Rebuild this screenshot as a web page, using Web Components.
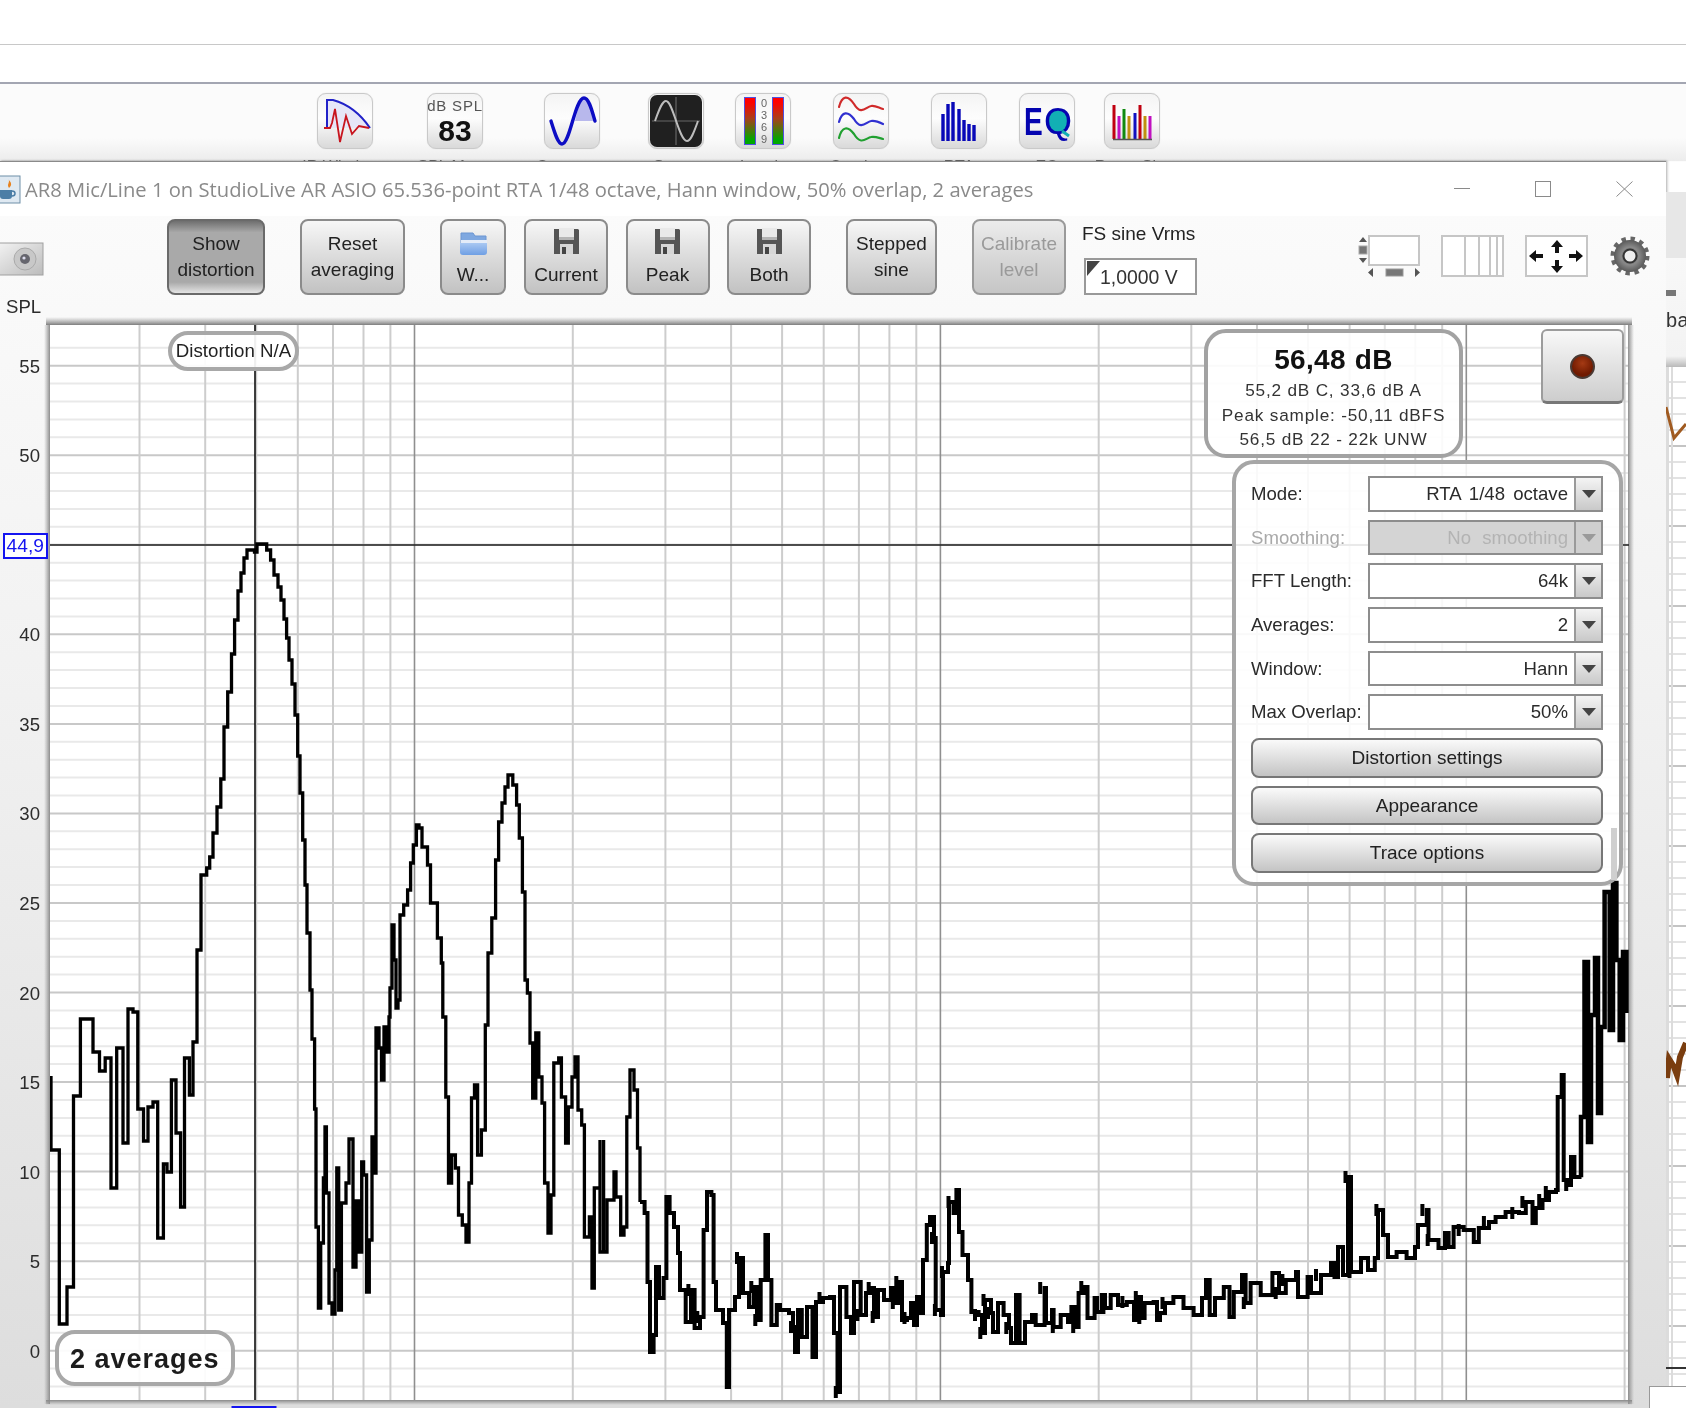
<!DOCTYPE html>
<html lang="en"><head><meta charset="utf-8"><title>REW RTA</title>
<style>
html,body{margin:0;padding:0;background:#fff;overflow:hidden}
body{font-family:"Liberation Sans",Arial,sans-serif;color:#222}
</style></head><body>
<rew-app></rew-app>
<script>
const base=':host{box-sizing:border-box} *,*::before,*::after{box-sizing:border-box}';
function def(name,html,extra){
  customElements.define(name,class extends HTMLElement{
    constructor(){super();const r=this.attachShadow({mode:'open'});
      r.innerHTML='<style>'+base+'</style>'+(typeof html==='function'?html(this):html);}
    connectedCallback(){if(extra)extra(this);}
  });
}
const FLOPPY='<svg width="25" height="26" viewBox="0 0 25 26"><path d="M0 1h24l1 1v24H0z" fill="#555"/><rect x="5" y="0" width="15" height="12" fill="#e9e9e9"/><rect x="5" y="9" width="15" height="3" fill="#b5b5b5"/><rect x="6" y="16" width="13" height="10" fill="#d6d6d6"/><rect x="8" y="19" width="4" height="7" fill="#444"/></svg>';
const FOLDER='<svg width="27" height="25" viewBox="0 0 27 25"><defs><linearGradient id="f" x1="0" y1="0" x2="0" y2="1"><stop offset="0" stop-color="#a9c8f2"/><stop offset="1" stop-color="#6f9fe4"/></linearGradient></defs><path d="M1 2h12l2 3h11v7H1z" fill="#7fa8e0" stroke="#6d96d2"/><rect x="1" y="9" width="26" height="3" fill="#e4ecf8"/><path d="M0 12h27v9q0 3-3 3H3q-3 0-3-3z" fill="url(#f)"/></svg>';

def('icon-tile',`<style>
:host{display:flex;flex:none;flex-direction:column;align-items:center;width:56px;height:90px}
.t{flex:none;width:56px;height:56px;border-radius:9px;border:1px solid #c9c9c9;background:linear-gradient(#f4f4f4,#fdfdfd 45%,#d9d9d9);display:block;overflow:hidden;box-shadow:0 0 1px #ccc}
.l{flex:none;margin-top:9px;font-size:16px;line-height:18px;white-space:nowrap;color:#555;display:flex;justify-content:center;width:56px}
::slotted(svg){display:block;width:54px;height:54px}
</style><div class="t"><slot></slot></div><div class="l"><span><slot name="label"></slot></span></div>`);

def('rew-iconbar',`<style>
:host{display:flex;flex:none;height:77px;padding:9px 0 0 317px;overflow:hidden;align-items:flex-start;background:linear-gradient(#fbfbfb,#fbfbfb 70%,#ececec)}
</style><slot></slot>`);

def('tool-button',(h)=>`<style>
:host{display:flex;flex:none;flex-direction:column;align-items:center;justify-content:center;height:76px;border-radius:8px;border:2px solid #8b8b8b;background:linear-gradient(#f7f7f7,#dedede 45%,#c2c2c2);font-size:19px;line-height:26.5px;color:#222;text-align:center}
:host([disabled]){color:#9a9a9a;border-color:#9a9a9a;background:linear-gradient(#ececec,#d8d8d8 50%,#c6c6c6)}
:host([pressed]){border-color:#6a6a6a;background:linear-gradient(#6f6f6f,#a9a9a9 16%,#a9a9a9 85%,#e4e4e4)}
:host([icon]){justify-content:flex-start;padding-top:7px}
.i{height:34px;display:flex;align-items:flex-start;flex:none}
</style>${h.hasAttribute('icon')?'<div class="i">'+(h.getAttribute('icon')==='folder'?'<span style="padding-top:3px;display:block">'+FOLDER+'</span>':FLOPPY)+'</div>':''}<slot></slot>`);

def('rew-select',(h)=>`<style>
:host{display:flex;flex:none;align-items:center;height:35.7px;font-size:18.6px;color:#2b2b2b}
.l{width:117px;flex:none;white-space:nowrap}
.b{flex:1;height:100%;display:flex;border:2px solid #8d8d8d;background:#fff}
.v{flex:1;text-align:right;padding-right:6px;line-height:32px;white-space:nowrap;word-spacing:3px}
.a{width:27px;flex:none;border-left:2px solid #9a9a9a;background:linear-gradient(#f4f4f4,#c9c9c9);display:flex;align-items:center;justify-content:center}
.a i{display:block;width:0;height:0;border:7px solid transparent;border-top:8px solid #444;border-bottom:0}
:host([disabled]){color:#a9a9a9}
:host([disabled]) .b{background:#d4d4d4}
:host([disabled]) .v{color:#b3b3b3;word-spacing:6px}
:host([disabled]) .a{background:#cfcfcf}
:host([disabled]) .a i{border-top-color:#9a9a9a}
</style><span class="l">${h.getAttribute('label')}</span><div class="b"><span class="v"><slot></slot></span><span class="a"><i></i></span></div>`);

def('rew-button',`<style>
:host{display:block;flex:none;height:39.5px;border-radius:8px;border:2px solid #777;background:linear-gradient(#fafafa,#e2e2e2 45%,#c4c4c4);font-size:19px;line-height:36px;text-align:center;color:#222}
</style><slot></slot>`);

def('control-panel',`<style>
:host{position:absolute;left:1232px;top:164px;width:391px;height:426px;border:4px solid #a6a6a6;border-radius:22px;background:rgba(255,255,255,.88);padding:12px 16px 0 15px;display:flex;flex-direction:column;gap:8px}
.s{position:absolute;left:375px;top:364px;width:6px;height:52px;background:#cfcfcf}
</style><slot></slot><div class="s"></div>`);

def('level-panel',`<style>
:host{position:absolute;left:1204px;top:33px;width:259px;height:129px;border:4px solid #a2a2a2;border-radius:22px;background:rgba(255,255,255,.9);display:flex;flex-direction:column;align-items:center;padding-top:9px;color:#333;font-size:17.2px;letter-spacing:.8px;line-height:24.5px;text-align:center;white-space:nowrap}
.m{font-size:28px;line-height:35px;font-weight:700;color:#111;letter-spacing:.3px;margin-bottom:1px;word-spacing:1px}
</style><div class="m">56,48 dB</div><div>55,2 dB C, 33,6 dB A</div><div>Peak sample: -50,11 dBFS</div><div>56,5 dB 22 - 22k UNW</div>`);

def('record-button',`<style>
:host{position:absolute;left:1541px;top:33px;width:83px;height:75px;border-radius:6px;border:2px solid #9c9c9c;border-bottom:3px solid #777;background:linear-gradient(#f8f8f8,#cdcdcd);display:flex;align-items:center;justify-content:center}
i{display:block;width:25px;height:25px;border-radius:50%;border:2px solid #4a3a34;background:radial-gradient(circle at 50% 35%,#a53a14,#701a00 65%)}
</style><i></i>`);

def('info-pill',`<style>
:host{position:absolute;display:flex;align-items:center;justify-content:center;white-space:nowrap;background:rgba(255,255,255,.92);border:4px solid #a8a8a8;border-radius:20px;color:#222}
</style><slot></slot>`);

def('value-tag',`<style>
:host{position:absolute;left:3px;top:237px;width:44.5px;height:26px;border:2px solid #1414f0;background:#fff;color:#1414f0;font-size:19.2px;line-height:22px;text-align:center}
</style><slot></slot>`);

const TR=[[59.3,1150],[59.3,1324],[67,1324],[67,1287],[73.5,1287],[73.5,1096],[80.4,1096],[80.4,1019],[93,1019],[93,1052],[99.5,1052],[99.5,1071],[105.2,1071],[105.2,1058],[111,1058],[111,1188],[116.7,1188],[116.7,1048],[123,1048],[123,1143],[128,1143],[128,1009],[133,1009],[133,1012],[137.8,1012],[137.8,1109],[143.5,1109],[143.5,1141],[148,1141],[148,1107],[153,1107],[153,1102],[157.7,1102],[157.7,1238],[163.4,1238],[163.4,1164],[167,1164],[167,1172],[171.4,1172],[171.4,1080],[176,1080],[176,1133],[180.6,1133],[180.6,1207],[184.5,1207],[184.5,1058],[189.4,1058],[189.4,1095],[193,1095],[193,1042],[197,1042],[197,950]];
const S=[[201,875],[206.7,868],[209.7,857],[213,833],[217,807],[220.8,779],[224,727],[227.7,692],[231.5,654],[234.6,620],[238,591],[241,573],[244,558],[247,550],[254.5,552],[257,544],[262,544],[266.7,550],[270.6,560],[274,575],[278,587],[281,600],[284,619],[286.6,638],[289,660],[292,684],[295,715],[297.7,756],[300,793],[302.7,840],[305,885],[307,933],[310,990],[312,1039],[314.6,1109],[316,1227],[318.4,1308],[320.7,1243],[323.4,1178],[325,1127],[326.4,1193],[329,1303],[332,1314],[335,1270],[336.8,1168],[338.7,1310],[341.4,1203],[346,1183],[349,1139],[353,1267],[356,1201],[359,1252],[361.7,1162],[363.6,1175],[366.6,1292],[369.3,1240],[372,1137],[375,1173],[376,1028],[379,1048],[381.5,1080],[384,1027],[387.3,1052],[389,1017],[390,988],[392,925],[394,960],[396,1008],[398,1000],[400,915],[403.7,905],[407.6,890],[410.6,863],[413.3,845],[416.4,825],[419,828],[422,847],[427.5,865],[430.5,903],[435.5,903],[437.4,938],[441.3,963],[442.8,1017],[445.8,1097],[448.5,1183],[451.6,1155],[455.4,1168],[458.5,1215],[462.3,1225],[466,1242],[469,1183],[471.5,1098],[474.5,1085],[477.6,1155],[481.4,1130],[485.3,1025],[488,953],[491.8,918],[495.6,860],[498.6,822],[502,803],[505,787],[508,775],[511,775],[512.8,785],[516.6,805],[519.3,838],[522.4,892],[525,980],[527.4,993],[530,1043],[532.7,1098],[535.8,1033],[538.8,1077],[542,1103],[544.6,1183],[548,1233],[551,1195],[553.8,1063],[558.7,1058],[561.4,1097],[565.6,1143],[568.3,1107],[572,1077],[575,1057],[578,1110],[581.7,1125],[584.4,1237],[589.4,1217],[592,1288],[594.3,1188],[600,1140],[600,1252],[603.6,1140],[603.6,1252],[607,1200],[614,1172],[616,1197],[620.7,1235],[624,1227],[626.8,1117],[630,1070],[634,1090],[637.5,1148],[640,1202],[644.6,1213],[647.5,1282],[650,1352],[653.6,1335],[656,1267],[659,1298],[663.6,1278],[666.4,1197],[669.6,1213],[674,1227],[678,1253],[680,1290],[685.7,1322],[691,1290],[694.6,1328],[700,1317],[703.6,1230],[707,1192],[711.4,1195],[713.6,1282],[716,1310],[723,1323],[726.8,1387],[729,1310],[735,1297],[739,1258],[743,1293],[749,1307],[753.6,1287],[757,1320],[760.7,1280],[765.4,1235],[768,1280],[771.4,1325],[776.8,1305],[780,1310],[789,1313],[793,1327],[795,1352],[798,1310],[801.8,1337],[807,1307],[812.5,1357],[816,1302],[823,1298],[830,1297],[834,1333],[837.5,1392],[840,1287],[846.4,1317],[851,1333],[854,1282],[860.7,1315],[866,1293],[871.4,1288],[874,1317],[878,1290],[884,1300],[891,1288],[894.6,1303],[898,1282],[902,1320],[907,1318],[911,1303],[914,1325],[917,1297],[919.6,1313],[923,1260],[926.8,1225],[930,1217],[934,1238],[935.7,1310],[941,1315],[943,1272],[948,1263],[949,1202],[953.6,1213],[956.4,1190],[959,1232],[962.5,1255],[968,1280],[971.4,1312],[978.6,1315],[982,1333],[985,1300],[991,1313],[993,1332],[998,1303],[1003.6,1315],[1009,1328],[1011,1343],[1016,1295],[1019.6,1343],[1025,1322],[1032,1315],[1035.7,1325],[1044.6,1288],[1046,1323],[1052,1310],[1053.6,1327],[1060.7,1315],[1068,1322],[1071.4,1307],[1075,1327],[1078.6,1293],[1084,1287],[1087.5,1318],[1094.6,1298],[1097,1312],[1101.8,1295],[1105,1308],[1110.7,1295],[1118,1305],[1126.8,1302],[1134,1320],[1137.5,1297],[1141,1318],[1144.6,1303],[1153.6,1302],[1157,1320],[1160,1313],[1165,1303],[1173.4,1297],[1183.5,1308],[1193.6,1315],[1202,1298],[1206,1280],[1209.7,1315],[1215,1298],[1223.8,1287],[1229.5,1317],[1233.8,1292],[1242,1275],[1245.6,1303],[1250.6,1283],[1260.7,1295],[1272.4,1273],[1279,1293],[1285.8,1280],[1296,1272],[1298,1297],[1307.6,1277],[1311,1293],[1321,1275],[1331,1263],[1334.5,1277],[1338,1247],[1343,1275],[1348,1177],[1351,1272],[1361,1258],[1368,1270],[1374.8,1258],[1378,1210],[1383,1235],[1388,1257],[1396.6,1252],[1406.6,1258],[1415,1247],[1418,1225],[1426.8,1210],[1428.5,1240],[1438.5,1248],[1445,1233],[1448.6,1247],[1453.6,1227],[1463.7,1230],[1473.8,1242],[1478.8,1228],[1489,1222],[1495.6,1217],[1505.6,1212],[1519,1213],[1525.8,1202],[1532.5,1223],[1535.8,1208],[1542.5,1200],[1549,1192],[1556,1190],[1557.7,1097],[1561.7,1075],[1563.7,1180],[1568.7,1185],[1571,1157],[1574.4,1177],[1579.5,1175],[1581,1117],[1584.5,962],[1588,1142],[1591,1015],[1595,958],[1598,1113],[1601,1027],[1604.6,892],[1609.7,1030],[1613,883],[1616.4,960],[1619.7,1040],[1623,952],[1626.4,1013]];

def('rew-plot',()=>{
  const L=50,R=1628,T=325,B=1400;const y=d=>1350.7-17.91*d;let g='';
  for(let d=-2;d<=56;d++){ if(d%5===0)continue; const p=y(d).toFixed(1);g+=`<line x1="${L}" x2="${R}" y1="${p}" y2="${p}" stroke="#e9e9e9" stroke-width="2"/>`;}
  for(let d=0;d<=55;d+=5){const p=y(d).toFixed(1);g+=`<line x1="${L}" x2="${R}" y1="${p}" y2="${p}" stroke="#c8c8c8" stroke-width="2"/>`;}
  for(let dec=-1;dec<=3;dec++){for(let m=1;m<=9;m++){const x=414.5+525.9*(dec+Math.log10(m));if(x<L+4||x>R+1)continue;
    g+=`<line x1="${x.toFixed(1)}" x2="${x.toFixed(1)}" y1="${T}" y2="${B}" stroke="${m===1?'#8f8f8f':'#cdcdcd'}" stroke-width="${m===1?1.6:2}"/>`;}}
  let lab='';for(let d=0;d<=55;d+=5){if(d===45)continue;lab+=`<text x="40" y="${(y(d)+7).toFixed(1)}" text-anchor="end">${d}</text>`;}
  let dp='M51 1076V1150';
  for(const p of TR)dp+=`L${p[0]} ${p[1]}`;
  let d2='',d3='',d4='',px=197,py=950;
  for(const p of S){
    if(p[0]<=640)dp+=`H${p[0]}V${p[1]}`;
    else if(p[0]<=1580){ if(!d2)d2=`M${px} ${py}`; d2+=`H${p[0]}V${p[1]}`;
      if(p[0]>690&&(Math.round(p[0]*7)%3)===1){const mx=(p[0]+px)/2;d4+=`M${mx.toFixed(1)} ${p[1]-6}v12`;}}
    else { if(!d3)d3=`M${px} ${py}`; d3+=`H${p[0]}V${p[1]}`; }
    px=p[0];py=p[1];
  }
  return `<style>
:host{display:block;position:relative;flex:1;min-height:0}
svg{position:absolute;left:0;top:0;display:block}
text{font-family:"Liberation Sans",Arial,sans-serif;font-size:18.6px;fill:#2c2c2c}
</style>
<svg width="1634" height="1112" viewBox="0 296 1634 1112">
<defs>
<linearGradient id="sl" x1="0" x2="1" y1="0" y2="0"><stop offset="0" stop-color="#999" stop-opacity="0"/><stop offset="1" stop-color="#8d8d8d"/></linearGradient>
<linearGradient id="sr" x1="1" x2="0" y1="0" y2="0"><stop offset="0" stop-color="#999" stop-opacity="0"/><stop offset="1" stop-color="#8d8d8d"/></linearGradient>
<linearGradient id="st" x1="0" x2="0" y1="0" y2="1"><stop offset="0" stop-color="#999" stop-opacity="0"/><stop offset="1" stop-color="#7d7d7d"/></linearGradient>
<linearGradient id="sb" x1="0" x2="0" y1="1" y2="0"><stop offset="0" stop-color="#999" stop-opacity="0"/><stop offset="1" stop-color="#888"/></linearGradient>
<clipPath id="c"><rect x="${L}" y="${T}" width="${R-L+1}" height="${B-T}"/></clipPath></defs>
<rect x="44" y="325" width="6" height="1079" fill="url(#sl)"/>
<rect x="1628" y="325" width="6" height="1079" fill="url(#sr)"/>
<rect x="46" y="317" width="1586" height="8" fill="url(#st)"/>
<rect x="46" y="1400" width="1586" height="5" fill="url(#sb)"/>
<rect x="${L}" y="${T}" width="${R-L}" height="${B-T}" fill="#fff"/>
${g}
<g clip-path="url(#c)">
<line x1="255" x2="255" y1="323" y2="1400" stroke="#111" stroke-width="1.6"/>
<line x1="50" x2="1630" y1="545" y2="545" stroke="#222" stroke-width="1.6"/>
<path d="${dp}" fill="none" stroke="#000" stroke-width="3.3"/>
<path d="${d2}" fill="none" stroke="#000" stroke-width="4"/>
<path d="${d4}" fill="none" stroke="#000" stroke-width="4"/>
<path d="${d3}" fill="none" stroke="#000" stroke-width="4.5"/>
</g>
<text x="6" y="313">SPL</text>
${lab}
<rect x="231.5" y="1406" width="45" height="4" fill="#1414f0"/>
</svg><slot></slot>`;
});

def('window-title',`<style>
:host{display:flex;flex:none;align-items:center;height:55px;background:#fff;padding-right:33px;font-family:"Open Sans",sans-serif;color:#8a8a8a;font-size:20.2px;border-top:1px solid #8a8a8a;white-space:nowrap}
.j{flex:none;width:21px;height:29px;margin:0 4px 0 0}
.t{flex:1}
.c{flex:none;display:flex;align-items:center}
</style><svg class="j" viewBox="0 0 21 29"><rect x="-3" y="1" width="23" height="27" fill="#dfe9f2" stroke="#6e8fa8"/><path d="M8 4c3 3-2 5 1 9 3-3 3-5-1-9z" fill="#e8821e"/><path d="M0 15h12v6c0 2-1 3-3 3H3c-2 0-3-1-3-3z" fill="#4c7ea6"/><path d="M12 16c4 0 4 5 0 5" fill="none" stroke="#4c7ea6" stroke-width="1.5"/></svg>
<span class="t"><slot></slot></span>
<div class="c"><svg width="16" height="16" viewBox="0 0 16 16" style="margin-right:65px"><path d="M0 7.5h16" stroke="#8a8a8a"/></svg>
<svg width="16" height="16" viewBox="0 0 16 16" style="margin-right:65px"><rect x=".5" y=".5" width="15" height="15" fill="none" stroke="#8a8a8a"/></svg>
<svg width="17" height="16" viewBox="0 0 17 16"><path d="M.5 .5l16 15M16.5 .5l-16 15" stroke="#8a8a8a" fill="none"/></svg></div>`);

def('tool-row',`<style>
:host{display:flex;flex:none;height:80px;padding-top:3px;align-items:flex-start}
</style><slot></slot>`);

def('fs-input',`<style>
:host{display:flex;flex:none;flex-direction:column;width:116px;height:76px;font-size:19px;color:#222}
.l{height:39px;flex:none;white-space:nowrap;padding-top:3px;line-height:24px}
.b{flex:none;width:113px;height:37px;margin-left:2px;border:2px solid #999;background:#fff;position:relative;padding-left:14px;line-height:35px;white-space:nowrap;color:#333;font-size:19.4px}
.b::before{content:"";position:absolute;left:1px;top:1px;border-top:15px solid #444;border-right:13px solid transparent}
</style><div class="l"><slot name="label"></slot></div><div class="b"><slot></slot></div>`);

def('rew-backdrop',`<style>
:host{display:flex;flex-direction:column;flex:1;position:relative;overflow:hidden;background:#fff;box-shadow:inset 3px 0 3px -2px #aaa}
.a{height:31px;flex:none}.b{height:66px;flex:none;background:#e7e7e7}
.c{height:109px;flex:none;background:linear-gradient(#f8f8f8,#f3f3f3 90%,#b9b9b9);font-size:20px;color:#333;padding:52px 0 0 0;letter-spacing:.5px;position:relative;overflow:hidden;line-height:20px}
.c::before{content:"";position:absolute;left:0;top:32px;width:10px;height:6px;background:#777}
.d{flex:1;position:relative;background:
 linear-gradient(90deg,#dcdcdc 0 3px,transparent 3px 5px,#dcdcdc 5px 7px,transparent 7px),
 repeating-linear-gradient(transparent 0 78px,#c4c4c4 78px 80px),
 repeating-linear-gradient(#fff 0 14px,#e2e2e2 14px 16px);}
svg{position:absolute;left:0;top:0}
.k{position:absolute;left:0;right:0;top:1000px;height:2px;background:#333}
</style><div class="a"></div><div class="b"></div><div class="c">ba</div><div class="d"><svg width="20" height="1040" viewBox="0 0 20 1040"><path d="M0 40l8 31 12-14" fill="none" stroke="#a05a20" stroke-width="3"/><path d="M1 711l2-19 5 8 3 8 3-18 6-14" fill="none" stroke="#7a3d0f" stroke-width="6"/></svg><div class="k"></div></div>`);

def('rew-window',`<style>
:host{display:flex;flex-direction:column;flex:none;width:1666px;position:relative;background:linear-gradient(#fbfbfb 4%,#f2f2f2 40%,#dddddd);box-shadow:1px 0 2px #777}
</style><slot></slot>`);

def('rew-app',`<style>
:host{display:flex;flex-direction:column;width:1686px;height:1408px;position:relative;overflow:hidden;background:#fff;filter:blur(.45px)}
.top{height:45px;flex:none;border-bottom:1px solid #c8c8c8}
.top2{height:39px;flex:none;border-bottom:2px solid #a3a6b2}
.row{display:flex;flex:1;min-height:0}
.wb{position:absolute;left:1649px;top:1386px;width:37px;height:22px;background:#fff;border:1px solid #999;border-right:0;border-bottom:0}
.tsvg{flex:none;display:block}
</style>
<div class="top"></div><div class="top2"></div>
<rew-iconbar>
 <icon-tile><svg viewBox="0 0 54 54"><path d="M7 34h2V6h6Q37 12 52 34" fill="#e6e6f8" stroke="#2222c8" stroke-width="2"/><path d="M6 34h6l2-5 3-14 5 33 6-26 6 18 7-8 10 2" fill="none" stroke="#c8141e" stroke-width="1.8"/></svg><span slot="label">IR Windows</span></icon-tile>
 <icon-tile style="margin-left:54px"><svg viewBox="0 0 54 54"><text x="27" y="17" text-anchor="middle" font-family="Liberation Sans" font-size="15" letter-spacing=".8" fill="#555">dB SPL</text><text x="27" y="47" text-anchor="middle" font-family="Liberation Sans" font-size="30" font-weight="700" fill="#111">83</text></svg><span slot="label">SPL Meter</span></icon-tile>
 <icon-tile style="margin-left:61px"><svg viewBox="0 0 54 54"><path d="M6 27H50C47 17 44 4 39 4 36 4 33 14 30 27z" fill="#b8b8ec"/><path d="M6 27C10 40 13 50 17 50 25 50 30 4 39 4 44 4 47 17 50 27" fill="none" stroke="#0c0cc4" stroke-width="3.4" stroke-linecap="round"/></svg><span slot="label">Generator</span></icon-tile>
 <icon-tile style="margin-left:48px"><svg viewBox="0 0 54 54"><rect x="1" y="1" width="52" height="52" rx="7" fill="#202020"/><path d="M27 3v48M3 27h48" stroke="#666" stroke-width="1.2"/><path d="M6 27C10 16 13 7 17 7 24 7 30 47 38 47 42 47 45 38 49 27" fill="none" stroke="#bdbdbd" stroke-width="2"/></svg><span slot="label">Scope</span></icon-tile>
 <icon-tile style="margin-left:31px"><svg viewBox="0 0 54 54"><defs><linearGradient id="m" x1="0" y1="0" x2="0" y2="1"><stop offset=".1" stop-color="#f00"/><stop offset=".45" stop-color="#a8401c"/><stop offset=".9" stop-color="#00a800"/></linearGradient></defs><rect x="8.5" y="3.5" width="11" height="47" fill="url(#m)" stroke="#5050e0"/><rect x="36.5" y="3.5" width="11" height="47" fill="url(#m)" stroke="#5050e0"/><g font-family="Liberation Sans" font-size="11" fill="#666" text-anchor="middle"><text x="28" y="13">0</text><text x="28" y="25">3</text><text x="28" y="37">6</text><text x="28" y="49">9</text></g></svg><span slot="label">Levels</span></icon-tile>
 <icon-tile style="margin-left:42px"><svg viewBox="0 0 54 54" fill="none" stroke-width="2.2" stroke-linecap="round"><path d="M5 13C8 1 14 1 20 10 27 22 32 13 37 12 41 11 45 14 49 15" stroke="#d02a2a"/><path d="M5 28C8 17 14 17 20 25 27 37 32 28 37 27 41 26 45 28 49 30" stroke="#3030d0"/><path d="M5 44C8 32 14 32 20 40 27 52 32 44 37 43 41 42 45 44 49 45" stroke="#20a030"/></svg><span slot="label">Overlays</span></icon-tile>
 <icon-tile style="margin-left:42px"><svg viewBox="0 0 54 54" fill="none" stroke="#0808b8" stroke-width="3.4"><path d="M11 47V20M16 47V10M21 47V8M27 47V15M32 47V26M37 47V30M42 47V31"/></svg><span slot="label">RTA</span></icon-tile>
 <icon-tile style="margin-left:32px"><svg viewBox="0 0 54 54"><circle cx="38" cy="27" r="11" fill="#12b0b4"/><text transform="translate(4 41) scale(.72 1)" font-family="Liberation Sans" font-size="39" font-weight="700" fill="#0404b0">E</text><text x="24" y="40" font-family="Liberation Sans" font-size="36" fill="#0404b0">Q</text><path d="M42 37l7 5" stroke="#12b0b4" stroke-width="3"/></svg><span slot="label">EQ</span></icon-tile>
 <icon-tile style="margin-left:29px"><svg viewBox="0 0 54 54" fill="none" stroke-width="3"><path d="M9 45V11" stroke="#c00010"/><path d="M14 45V22" stroke="#c010c0"/><path d="M19 45V15" stroke="#108a10"/><path d="M24 45V22" stroke="#c09010"/><path d="M30 45V19" stroke="#1010c0"/><path d="M35 45V11" stroke="#c00010"/><path d="M40 45V22" stroke="#c09010"/><path d="M45 45V22" stroke="#c010c0"/><path d="M8 45.5h39" stroke="#555" stroke-width="1.5"/></svg><span slot="label">Room Sim</span></icon-tile>
</rew-iconbar>
<div class="row">
<rew-window>
 <window-title>AR8 Mic/Line 1 on StudioLive AR ASIO 65.536-point RTA 1/48 octave, Hann window, 50% overlap, 2 averages</window-title>
 <tool-row>
  <svg class="tsvg" width="44" height="34" viewBox="0 0 44 34" style="margin-top:23px"><defs><linearGradient id="cam" x1="0" x2="1" y1="0" y2="1"><stop offset="0" stop-color="#f4f4f4"/><stop offset="1" stop-color="#bbb"/></linearGradient></defs><rect x="-4" y="1" width="47" height="32" fill="url(#cam)" stroke="#a0a0a0"/><circle cx="25" cy="17" r="11" fill="#c8c8c8" stroke="#aaa"/><circle cx="25" cy="17" r="5" fill="#66666e"/><circle cx="24" cy="16" r="1.6" fill="#dde"/></svg>
  <tool-button pressed style="width:98px;margin-left:123px">Show<br>distortion</tool-button>
  <tool-button style="width:105px;margin-left:35px">Reset<br>averaging</tool-button>
  <tool-button icon="folder" style="width:66px;margin-left:35px">W...</tool-button>
  <tool-button icon="save" style="width:84px;margin-left:18px">Current</tool-button>
  <tool-button icon="save" style="width:84px;margin-left:17.5px">Peak</tool-button>
  <tool-button icon="save" style="width:84px;margin-left:17.5px">Both</tool-button>
  <tool-button style="width:91px;margin-left:35px">Stepped<br>sine</tool-button>
  <tool-button disabled style="width:94px;margin-left:35px">Calibrate<br>level</tool-button>
  <fs-input style="margin-left:16px"><span slot="label">FS sine Vrms</span>1,0000 V</fs-input>
  <svg class="tsvg" width="64" height="44" viewBox="0 0 64 44" style="margin:16px 0 0 159px"><rect x="12" y="1" width="50" height="29" fill="#fff" stroke="#c6c6c6" stroke-width="2"/><path d="M6 2l4 5H2zM6 28l4-5H2z" fill="#555"/><rect x="2" y="11" width="8" height="8" fill="#777" stroke="#aaa"/><path d="M16 33v9l-5-4.500zM58 33v9l5-4.500z" fill="#555"/><rect x="29" y="34" width="17" height="7" fill="#777" stroke="#999"/></svg>
  <svg class="tsvg" width="63" height="42" viewBox="0 0 63 42" style="margin:16px 0 0 20px" fill="none" stroke="#c6c6c6" stroke-width="2"><rect x="1" y="1" width="61" height="40" fill="#fff"/><path d="M24 1v40M38 1v40M49 1v40M56 1v40"/></svg>
  <svg class="tsvg" width="63" height="42" viewBox="0 0 63 42" style="margin:16px 0 0 21px"><rect x="1" y="1" width="61" height="40" fill="#fff" stroke="#c6c6c6" stroke-width="2"/><path d="M32 5l-6 7h4v6h4v-6h4zM32 38l-6-7h4v-6h4v6h4zM4 21l7-6v4h7v4h-7v4zM58 21l-7-6v4h-7v4h7v4z" fill="#111"/></svg>
  <svg class="tsvg" width="40" height="40" viewBox="0 0 40 40" style="margin:17px 0 0 22px"><defs><radialGradient id="gr"><stop offset=".2" stop-color="#444"/><stop offset=".55" stop-color="#8a8a8a"/><stop offset="1" stop-color="#5a5a5a"/></radialGradient></defs><circle cx="20" cy="20" r="17" fill="none" stroke="#666" stroke-width="5" stroke-dasharray="4.300 4.600"/><circle cx="20" cy="20" r="16" fill="url(#gr)"/><circle cx="20" cy="20" r="6.500" fill="#efefef" stroke="#333" stroke-width="2"/></svg>
 </tool-row>
 <rew-plot>
  <value-tag>44,9</value-tag>
  <info-pill style="left:168px;top:35px;width:131px;height:40px;font-size:18.7px">Distortion N/A</info-pill>
  <info-pill style="left:54.7px;top:1034px;width:180px;height:56px;font-size:27px;font-weight:700;letter-spacing:1px;color:#1c1c1c;padding-top:2px">2 averages</info-pill>
  <level-panel></level-panel>
  <record-button></record-button>
  <control-panel>
   <rew-select label="Mode:">RTA 1/48 octave</rew-select>
   <rew-select label="Smoothing:" disabled>No smoothing</rew-select>
   <rew-select label="FFT Length:">64k</rew-select>
   <rew-select label="Averages:">2</rew-select>
   <rew-select label="Window:">Hann</rew-select>
   <rew-select label="Max Overlap:">50%</rew-select>
   <rew-button>Distortion settings</rew-button>
   <rew-button>Appearance</rew-button>
   <rew-button>Trace options</rew-button>
  </control-panel>
 </rew-plot>
</rew-window>
<rew-backdrop></rew-backdrop>
</div>
<div class="wb"></div>`);
</script></body></html>
